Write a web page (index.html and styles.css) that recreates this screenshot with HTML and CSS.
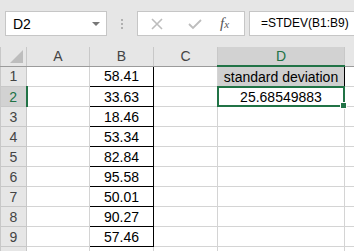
FILE: index.html
```html
<!DOCTYPE html>
<html lang="en">
<head>
  <meta charset="UTF-8">
  <title>Standard deviation</title>
  <link rel="stylesheet" href="styles.css">
</head>
<body>

  <div class="toolbar">
    <div class="namebox">
      <span>D2</span>
      <span class="arrow"></span>
    </div>
    <div class="grip">
      <i></i><i></i><i></i>
    </div>
    <div class="buttons">
      <svg class="btn-x" width="14" height="14" viewBox="0 0 14 14"><path d="M2 2 L12 12 M12 2 L2 12" stroke="#bdbdbd" stroke-width="1.6" fill="none"/></svg>
      <svg class="btn-ok" width="16" height="14" viewBox="0 0 16 14"><path d="M2 7 L6 11 L14 3" stroke="#bdbdbd" stroke-width="1.8" fill="none"/></svg>
      <span class="fx"><i>f</i><small>x</small></span>
    </div>
    <div class="formula">=STDEV(B1:B9)</div>
  </div>

  <table class="sheet">
    <colgroup>
      <col class="c-head">
      <col class="c-a">
      <col class="c-b">
      <col class="c-c">
      <col class="c-d">
      <col>
    </colgroup>
    <tr class="colhead">
      <th class="corner"><span class="tri"></span></th>
      <th>A</th>
      <th>B</th>
      <th>C</th>
      <th class="active">D</th>
      <th></th>
    </tr>
    <tr>
      <th class="rowhead">1</th>
      <td></td>
      <td class="val">58.41</td>
      <td></td>
      <td class="label">standard deviation</td>
      <td></td>
    </tr>
    <tr>
      <th class="rowhead active">2</th>
      <td></td>
      <td class="val">33.63</td>
      <td></td>
      <td class="result"><span class="sel"><span class="handle"></span></span>25.68549883</td>
      <td></td>
    </tr>
    <tr><th class="rowhead">3</th><td></td><td class="val">18.46</td><td></td><td></td><td></td></tr>
    <tr><th class="rowhead">4</th><td></td><td class="val">53.34</td><td></td><td></td><td></td></tr>
    <tr><th class="rowhead">5</th><td></td><td class="val">82.84</td><td></td><td></td><td></td></tr>
    <tr><th class="rowhead">6</th><td></td><td class="val">95.58</td><td></td><td></td><td></td></tr>
    <tr><th class="rowhead">7</th><td></td><td class="val">50.01</td><td></td><td></td><td></td></tr>
    <tr><th class="rowhead">8</th><td></td><td class="val">90.27</td><td></td><td></td><td></td></tr>
    <tr><th class="rowhead">9</th><td></td><td class="val">57.46</td><td></td><td></td><td></td></tr>
    <tr class="last"><th class="rowhead"></th><td></td><td></td><td></td><td></td><td></td></tr>
  </table>

</body>
</html>
```

FILE: styles.css
```css
html, body {
  overflow: hidden;
}
body {
  margin: 0;
  width: 354px;
  height: 252px;
  background: #ffffff;
  font-family: "Liberation Sans", Arial, sans-serif;
  font-size: 14px;
  color: #000;
}

.toolbar {
  display: flex;
  align-items: center;
  height: 47px;
  background: #e6e6e6;
}
.namebox {
  display: flex;
  flex-shrink: 0;
  align-items: center;
  justify-content: space-between;
  width: 102px;
  height: 25px;
  margin-left: 5px;
  padding: 0 6px 0 7px;
  box-sizing: border-box;
  background: #fff;
  border: 1px solid #c6c6c6;
}
.arrow {
  width: 0;
  height: 0;
  border-left: 4px solid transparent;
  border-right: 4px solid transparent;
  border-top: 4px solid #777;
}
.grip {
  display: flex;
  flex-shrink: 0;
  flex-direction: column;
  gap: 2px;
  margin: 0 14px;
}
.grip i {
  width: 2px;
  height: 2px;
  background: #b0b0b0;
}
.buttons {
  display: flex;
  flex-shrink: 0;
  align-items: center;
  width: 108px;
  height: 25px;
  padding-left: 12px;
  box-sizing: border-box;
  background: #fff;
  border: 1px solid #c6c6c6;
}
.btn-x { margin-right: 23px; }
.btn-ok { margin-right: 17px; }
.fx {
  font-family: "Liberation Serif", serif;
  color: #555;
  font-size: 15px;
}
.fx small {
  font-size: 11px;
  font-style: italic;
}
.formula {
  flex: 1;
  min-width: 0;
  height: 25px;
  margin-left: 4px;
  padding-left: 11px;
  line-height: 23px;
  box-sizing: border-box;
  background: #fff;
  border: 1px solid #c6c6c6;
  border-right: none;
  font-size: 12px;
  white-space: nowrap;
  overflow: hidden;
}

.sheet {
  border-collapse: collapse;
  table-layout: fixed;
  width: 360px;
}
.c-head { width: 26px; }
.c-a { width: 63px; }
.c-b { width: 64px; }
.c-c { width: 64px; }
.c-d { width: 127px; }

.sheet th,
.sheet td {
  height: 19px;
  padding: 0;
  border: 1px solid #d4d4d4;
  text-align: center;
  font-weight: normal;
  white-space: nowrap;
}
.sheet th {
  background: #e6e6e6;
  color: #444;
  border-color: #c8c8c8;
}
.colhead th {
  height: 18px;
  border-top: none;
  border-bottom-color: #9b9b9b;
}
.colhead th.active {
  background: #d2d2d2;
  color: #217346;
  border-bottom: 2px solid #217346;
}
.rowhead.active {
  background: #d2d2d2;
  color: #217346;
  border-right: 2px solid #217346;
}
.corner {
  position: relative;
}
.tri {
  position: absolute;
  right: 3px;
  bottom: 3px;
  width: 0;
  height: 0;
  border-left: 13px solid transparent;
  border-bottom: 13px solid #bdbdbd;
}
.sheet td.val {
  border: 1px solid #000;
}
.sheet td.label {
  background: #cfcfcf;
  border: 1px solid #000;
}
.result {
  position: relative;
}
.sel {
  position: absolute;
  left: -1px;
  top: -1px;
  right: -1px;
  bottom: -1px;
  border: 2px solid #217346;
}
.handle {
  position: absolute;
  right: -4px;
  bottom: -4px;
  width: 5px;
  height: 5px;
  background: #217346;
  border: 1px solid #fff;
}
.sheet .last th,
.sheet .last td {
  height: 4px;
  border-bottom: none;
}
```
